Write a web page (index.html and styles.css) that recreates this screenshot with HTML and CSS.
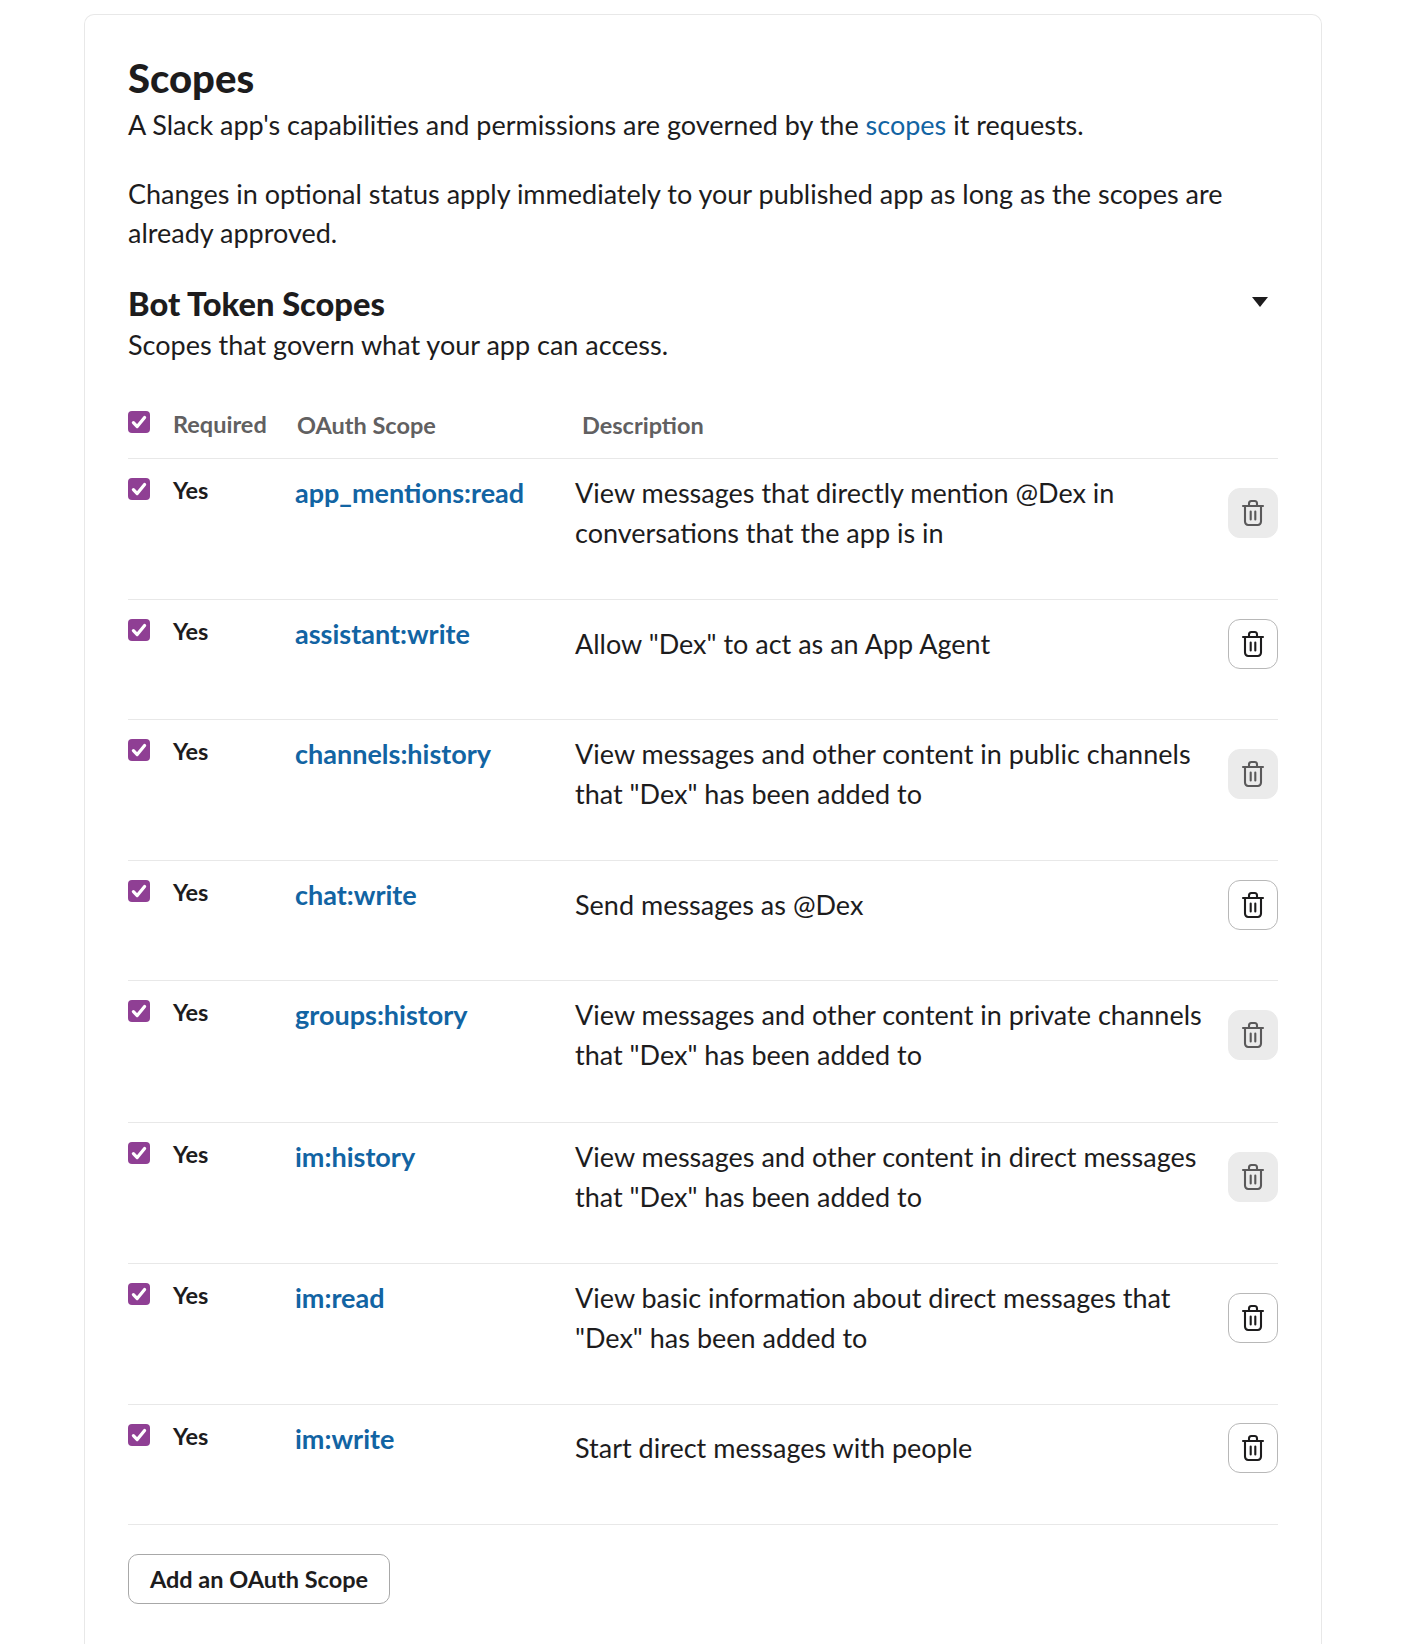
FILE: index.html
```html
<!DOCTYPE html>
<html lang="en">
<head>
  <meta charset="UTF-8" />
  <title>Scopes</title>
  <link rel="stylesheet" href="styles.css">
</head>
<body>
  <svg class="icon-defs" width="0" height="0" aria-hidden="true">
    <symbol id="check" viewBox="0 0 22 22">
      <path d="M5.4 11.6l3.8 4L16.6 6.4" fill="none" stroke="#fff" stroke-width="3.2" stroke-linecap="round" stroke-linejoin="round"/>
    </symbol>
    <symbol id="trash" viewBox="0 0 24 28">
      <path d="M2 7h20M8 6.5V4.5C8 3.1 9 2 10.4 2h3.2C15 2 16 3.1 16 4.5v2M4 7v15.5C4 24.4 5.4 26 7.2 26h9.6c1.8 0 3.2-1.6 3.2-3.5V7M9.7 12.5v8M14.3 12.5v8" fill="none" stroke="currentColor" stroke-width="2.1" stroke-linecap="round" stroke-linejoin="round"/>
    </symbol>
  </svg>

  <main class="card">
    <h1>Scopes</h1>
    <p class="intro">A Slack app's capabilities and permissions are governed by the <a href="#">scopes</a> it requests.</p>
    <p class="note">Changes in optional status apply immediately to your published app as long as the scopes are already approved.</p>

    <section class="token-head">
      <div>
        <h2>Bot Token Scopes</h2>
        <p class="sub">Scopes that govern what your app can access.</p>
      </div>
      <span class="caret"></span>
    </section>

    <div class="scope-head">
      <span class="check"><svg><use href="#check"/></svg></span>
      <span class="th-required">Required</span>
      <span class="th-scope">OAuth Scope</span>
      <span class="th-desc">Description</span>
    </div>

    <div class="scope-row">
      <span class="check"><svg><use href="#check"/></svg></span>
      <span class="yes">Yes</span>
      <a class="scope-name" href="#">app_mentions:read</a>
      <div class="scope-desc">
        <p>View messages that directly mention @Dex in conversations that the app is in</p>
        <button class="trash off"><svg><use href="#trash"/></svg></button>
      </div>
    </div>
    <div class="scope-row">
      <span class="check"><svg><use href="#check"/></svg></span>
      <span class="yes">Yes</span>
      <a class="scope-name" href="#">assistant:write</a>
      <div class="scope-desc">
        <p>Allow "Dex" to act as an App Agent</p>
        <button class="trash"><svg><use href="#trash"/></svg></button>
      </div>
    </div>
    <div class="scope-row">
      <span class="check"><svg><use href="#check"/></svg></span>
      <span class="yes">Yes</span>
      <a class="scope-name" href="#">channels:history</a>
      <div class="scope-desc">
        <p>View messages and other content in public channels that "Dex" has been added to</p>
        <button class="trash off"><svg><use href="#trash"/></svg></button>
      </div>
    </div>
    <div class="scope-row">
      <span class="check"><svg><use href="#check"/></svg></span>
      <span class="yes">Yes</span>
      <a class="scope-name" href="#">chat:write</a>
      <div class="scope-desc">
        <p>Send messages as @Dex</p>
        <button class="trash"><svg><use href="#trash"/></svg></button>
      </div>
    </div>
    <div class="scope-row">
      <span class="check"><svg><use href="#check"/></svg></span>
      <span class="yes">Yes</span>
      <a class="scope-name" href="#">groups:history</a>
      <div class="scope-desc">
        <p>View messages and other content in private channels that "Dex" has been added to</p>
        <button class="trash off"><svg><use href="#trash"/></svg></button>
      </div>
    </div>
    <div class="scope-row">
      <span class="check"><svg><use href="#check"/></svg></span>
      <span class="yes">Yes</span>
      <a class="scope-name" href="#">im:history</a>
      <div class="scope-desc">
        <p>View messages and other content in direct messages that "Dex" has been added to</p>
        <button class="trash off"><svg><use href="#trash"/></svg></button>
      </div>
    </div>
    <div class="scope-row">
      <span class="check"><svg><use href="#check"/></svg></span>
      <span class="yes">Yes</span>
      <a class="scope-name" href="#">im:read</a>
      <div class="scope-desc">
        <p>View basic information about direct messages that "Dex" has been added to</p>
        <button class="trash"><svg><use href="#trash"/></svg></button>
      </div>
    </div>
    <div class="scope-row last">
      <span class="check"><svg><use href="#check"/></svg></span>
      <span class="yes">Yes</span>
      <a class="scope-name" href="#">im:write</a>
      <div class="scope-desc">
        <p>Start direct messages with people</p>
        <button class="trash"><svg><use href="#trash"/></svg></button>
      </div>
    </div>

    <button class="add-scope">Add an OAuth Scope</button>
  </main>
</body>
</html>
```

FILE: styles.css
```css
html,
body {
  height: 1644px;
  overflow: hidden;
}

body {
  font-family: "Lato", sans-serif;
  background-color: #fff;
  margin: 0;
  padding: 14px 84px 0;
  box-sizing: border-box;
  color: #1d1c1d;
  font-size: 27px;
  line-height: 39px;
}

.icon-defs {
  display: none;
}

.card {
  border: 1px solid #e8e8e8;
  border-bottom: none;
  border-radius: 10px 10px 0 0;
  padding: 40px 43px 60px;
  height: 1700px;
  box-sizing: border-box;
}

h1 {
  font-size: 40px;
  line-height: 46px;
  font-weight: 900;
  margin: 0;
}

p {
  margin: 0;
}

a {
  color: #1264a3;
  text-decoration: none;
}

.intro {
  margin-top: 4px;
}

.note {
  margin-top: 30px;
}

.token-head {
  display: flex;
  justify-content: space-between;
  margin-top: 30.5px;
}

h2 {
  font-size: 32.6px;
  line-height: 42px;
  font-weight: 900;
  margin: 0;
}

.caret {
  width: 0;
  height: 0;
  margin: 14.5px 10px 0 0;
  border-left: 8px solid transparent;
  border-right: 8px solid transparent;
  border-top: 10px solid #1d1c1d;
}

.scope-head,
.scope-row {
  display: grid;
  grid-template-columns: 45px 122px 280px 1fr;
}

.scope-head {
  margin-top: 42px;
  height: 52.5px;
  font-size: 23.5px;
  font-weight: 700;
  color: #616061;
  line-height: 34px;
}

.check {
  display: block;
  width: 22px;
  height: 22px;
  border-radius: 4px;
  background-color: #8f3f94;
}

.check svg {
  display: block;
  width: 22px;
  height: 22px;
}

.scope-head .check {
  margin-top: 5px;
}

.th-required {
  margin-top: 1px;
}

.th-scope {
  margin-top: 2px;
  padding-left: 2px;
}

.th-desc {
  margin-top: 2px;
  padding-left: 7px;
}

.scope-row {
  border-top: 1px solid #e8e8e8;
  box-sizing: border-box;
  min-height: 120px;
  padding: 14px 0 46.2px;
}

.scope-row .check {
  margin-top: 5px;
}

.scope-row.last {
  border-bottom: 1px solid #e8e8e8;
  min-height: 121px;
}

.yes {
  font-size: 23.5px;
  font-weight: 700;
  line-height: 34px;
}

.scope-name {
  font-weight: 700;
  font-size: 27px;
  line-height: 40px;
}

.scope-desc {
  display: flex;
  align-items: center;
  justify-content: space-between;
  min-height: 58px;
}

.scope-desc p {
  width: 640px;
  line-height: 40px;
}

.trash {
  flex: none;
  width: 50px;
  height: 50px;
  padding: 0;
  display: flex;
  align-items: center;
  justify-content: center;
  background-color: #fff;
  border: 1px solid #b8b8b8;
  border-radius: 12px;
  color: #1d1c1d;
}

.trash.off {
  background-color: #ebebeb;
  border-color: #ebebeb;
  color: #5a595a;
}

.trash svg {
  width: 24px;
  height: 28px;
}

.add-scope {
  display: block;
  margin-top: 29px;
  width: 262px;
  height: 50px;
  padding: 0;
  font-family: inherit;
  font-size: 23.5px;
  font-weight: 700;
  color: #1d1c1d;
  background-color: #fff;
  border: 1px solid #a8a8a8;
  border-radius: 10px;
}
```
